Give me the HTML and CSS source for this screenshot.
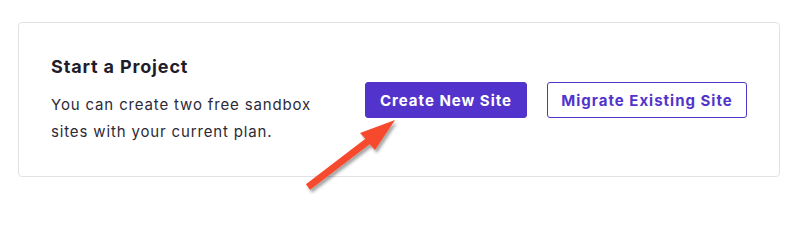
FILE: index.html
```html
<!DOCTYPE html>
<html lang="en">
<head>
<meta charset="utf-8">
<title>Start a Project</title>
<link rel="stylesheet" href="styles.css">
</head>
<body>
<div class="page">
  <section class="card">
    <div class="intro">
      <h2 class="title">Start a Project</h2>
      <p class="desc">You can create two free sandbox sites with your current plan.</p>
    </div>
    <div class="actions">
      <button class="btn btn-primary">Create New Site</button>
      <button class="btn btn-outline">Migrate Existing Site</button>
    </div>
  </section>
  <svg class="arrow" width="799" height="202" viewBox="0 0 799 202" aria-hidden="true">
    <defs>
      <filter id="sh" x="-20%" y="-20%" width="140%" height="140%">
        <feDropShadow dx="2" dy="3" stdDeviation="1.5" flood-color="#000" flood-opacity="0.35"/>
      </filter>
    </defs>
    <polygon filter="url(#sh)" fill="#f64a2d" points="305.9,184.2 365.4,138.7 360,133 395,120 375,150 369.6,144.3 310.1,189.8"/>
  </svg>
</div>
</body>
</html>
```
FILE: styles.css
```css
* { box-sizing: border-box; }
html, body { margin: 0; padding: 0; background: #ffffff; }
body { font-family: Inter, "Noto Sans", "DejaVu Sans", sans-serif; }
.page { position: relative; width: 799px; height: 202px; padding: 22px 19px 0 18px; }
.card {
  height: 155px;
  border: 1px solid #dfe3e6;
  border-radius: 4px;
  display: flex;
  align-items: center;
  justify-content: space-between;
  padding: 2px 32px 0 32px;
}
.intro { width: 280px; }
.title {
  margin: 0 0 14px 0;
  font-size: 18px;
  line-height: 20px;
  font-weight: 700;
  letter-spacing: 0.85px;
  color: #1f1d2a;
}
.desc {
  margin: 0;
  font-size: 15px;
  line-height: 27px;
  letter-spacing: 0.85px;
  color: #2c2a38;
}
.actions { display: flex; gap: 20px; margin-top: -1px; }
.btn {
  height: 36px;
  border-radius: 3px;
  font-family: inherit;
  font-size: 15px;
  font-weight: 700;
  letter-spacing: 1px;
  padding: 0;
  cursor: pointer;
}
.btn-primary { background: #5234cc; color: #ffffff; border: 1px solid #5234cc; width: 162px; }
.btn-outline { background: #ffffff; color: #5234cc; border: 1px solid #5234cc; width: 200px; }
.arrow { position: absolute; top: 0; left: 0; pointer-events: none; }
```
